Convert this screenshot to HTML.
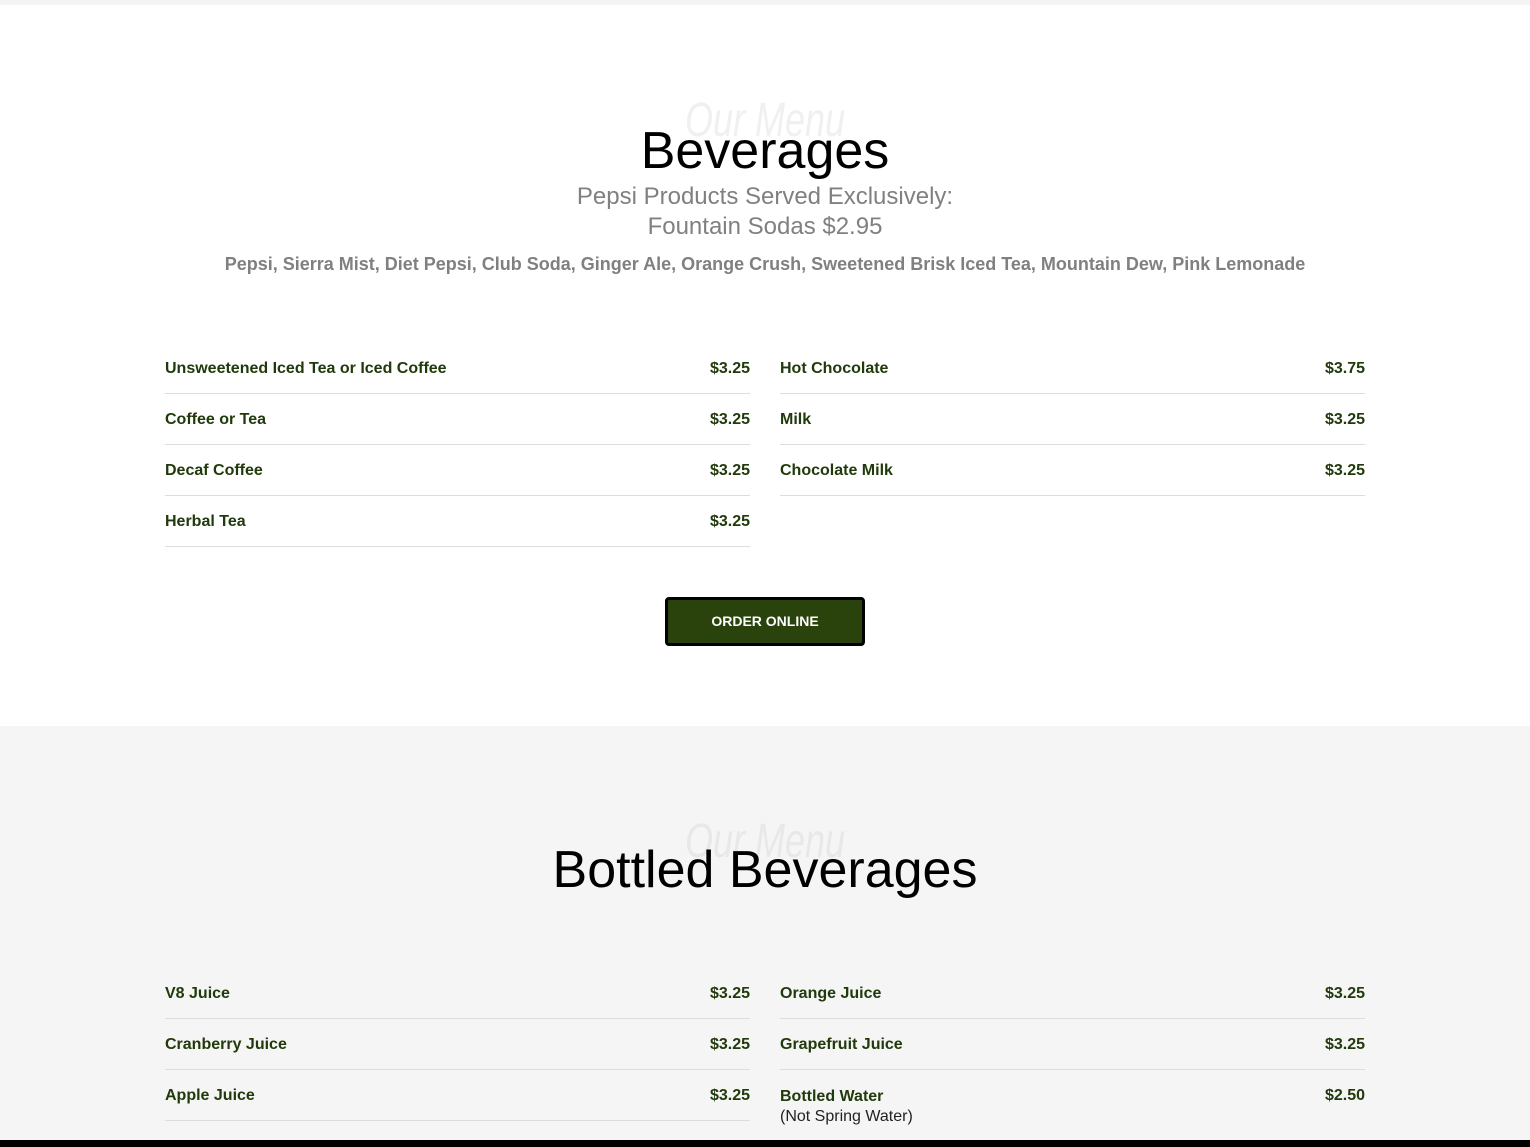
<!DOCTYPE html><html><head><style>
body{margin:0;width:1530px;height:1147px;overflow:hidden;background:#fff;font-family:"Liberation Sans",sans-serif;position:relative}
.a{position:absolute}
.c{left:0;width:1530px;text-align:center}
.row{position:absolute;width:585px;height:43px;border-bottom:1px solid #ddd;color:#213a0b;font-weight:bold;font-size:16px}
.row span{position:absolute;top:10px}
.row .p{right:0}
.ghost{font-family:"Liberation Sans Narrow","Liberation Sans",sans-serif;font-style:italic;color:#f0f0f0;font-size:48px;transform:scaleX(0.75)}
</style></head><body>
<div class="a" style="top:0;left:0;width:1530px;height:5px;background:#f4f4f4"></div>
<div class="a c ghost" style="top:93px">Our Menu</div>
<div class="a c" style="top:121px;font-size:52px;color:#000">Beverages</div>
<div class="a c" style="top:182px;font-size:24px;color:#808080;line-height:30px">Pepsi Products Served Exclusively:<br>Fountain Sodas $2.95</div>
<div class="a c" style="top:254px;font-size:18px;color:#808080;font-weight:bold">Pepsi, Sierra Mist, Diet Pepsi, Club Soda, Ginger Ale, Orange Crush, Sweetened Brisk Iced Tea, Mountain Dew, Pink Lemonade</div>

<div class="row" style="left:165px;top:350px"><span>Unsweetened Iced Tea or Iced Coffee</span><span class="p">$3.25</span></div>
<div class="row" style="left:165px;top:401px"><span>Coffee or Tea</span><span class="p">$3.25</span></div>
<div class="row" style="left:165px;top:452px"><span>Decaf Coffee</span><span class="p">$3.25</span></div>
<div class="row" style="left:165px;top:503px"><span>Herbal Tea</span><span class="p">$3.25</span></div>
<div class="row" style="left:780px;top:350px"><span>Hot Chocolate</span><span class="p">$3.75</span></div>
<div class="row" style="left:780px;top:401px"><span>Milk</span><span class="p">$3.25</span></div>
<div class="row" style="left:780px;top:452px"><span>Chocolate Milk</span><span class="p">$3.25</span></div>

<div class="a" style="left:665px;top:597px;width:194px;height:43px;background:#2a420b;border:3px solid #000;border-radius:4px;color:#fff;font-size:14px;font-weight:bold;text-align:center;line-height:43px">ORDER ONLINE</div>

<div class="a" style="top:726px;left:0;width:1530px;height:414px;background:#f5f5f5"></div>
<div class="a c ghost" style="top:814px;color:#e8e8e8">Our Menu</div>
<div class="a c" style="top:840px;font-size:52px;color:#000">Bottled Beverages</div>
<div class="row" style="left:165px;top:975px"><span>V8 Juice</span><span class="p">$3.25</span></div>
<div class="row" style="left:165px;top:1026px"><span>Cranberry Juice</span><span class="p">$3.25</span></div>
<div class="row" style="left:165px;top:1077px"><span>Apple Juice</span><span class="p">$3.25</span></div>
<div class="row" style="left:780px;top:975px"><span>Orange Juice</span><span class="p">$3.25</span></div>
<div class="row" style="left:780px;top:1026px"><span>Grapefruit Juice</span><span class="p">$3.25</span></div>
<div class="row" style="left:780px;top:1077px;border:none"><span style="line-height:20px">Bottled Water<br><b style="font-weight:normal;color:#222">(Not Spring Water)</b></span><span class="p">$2.50</span></div>
<div class="a" style="top:1140px;left:0;width:1530px;height:7px;background:#000"></div>
</body></html>
